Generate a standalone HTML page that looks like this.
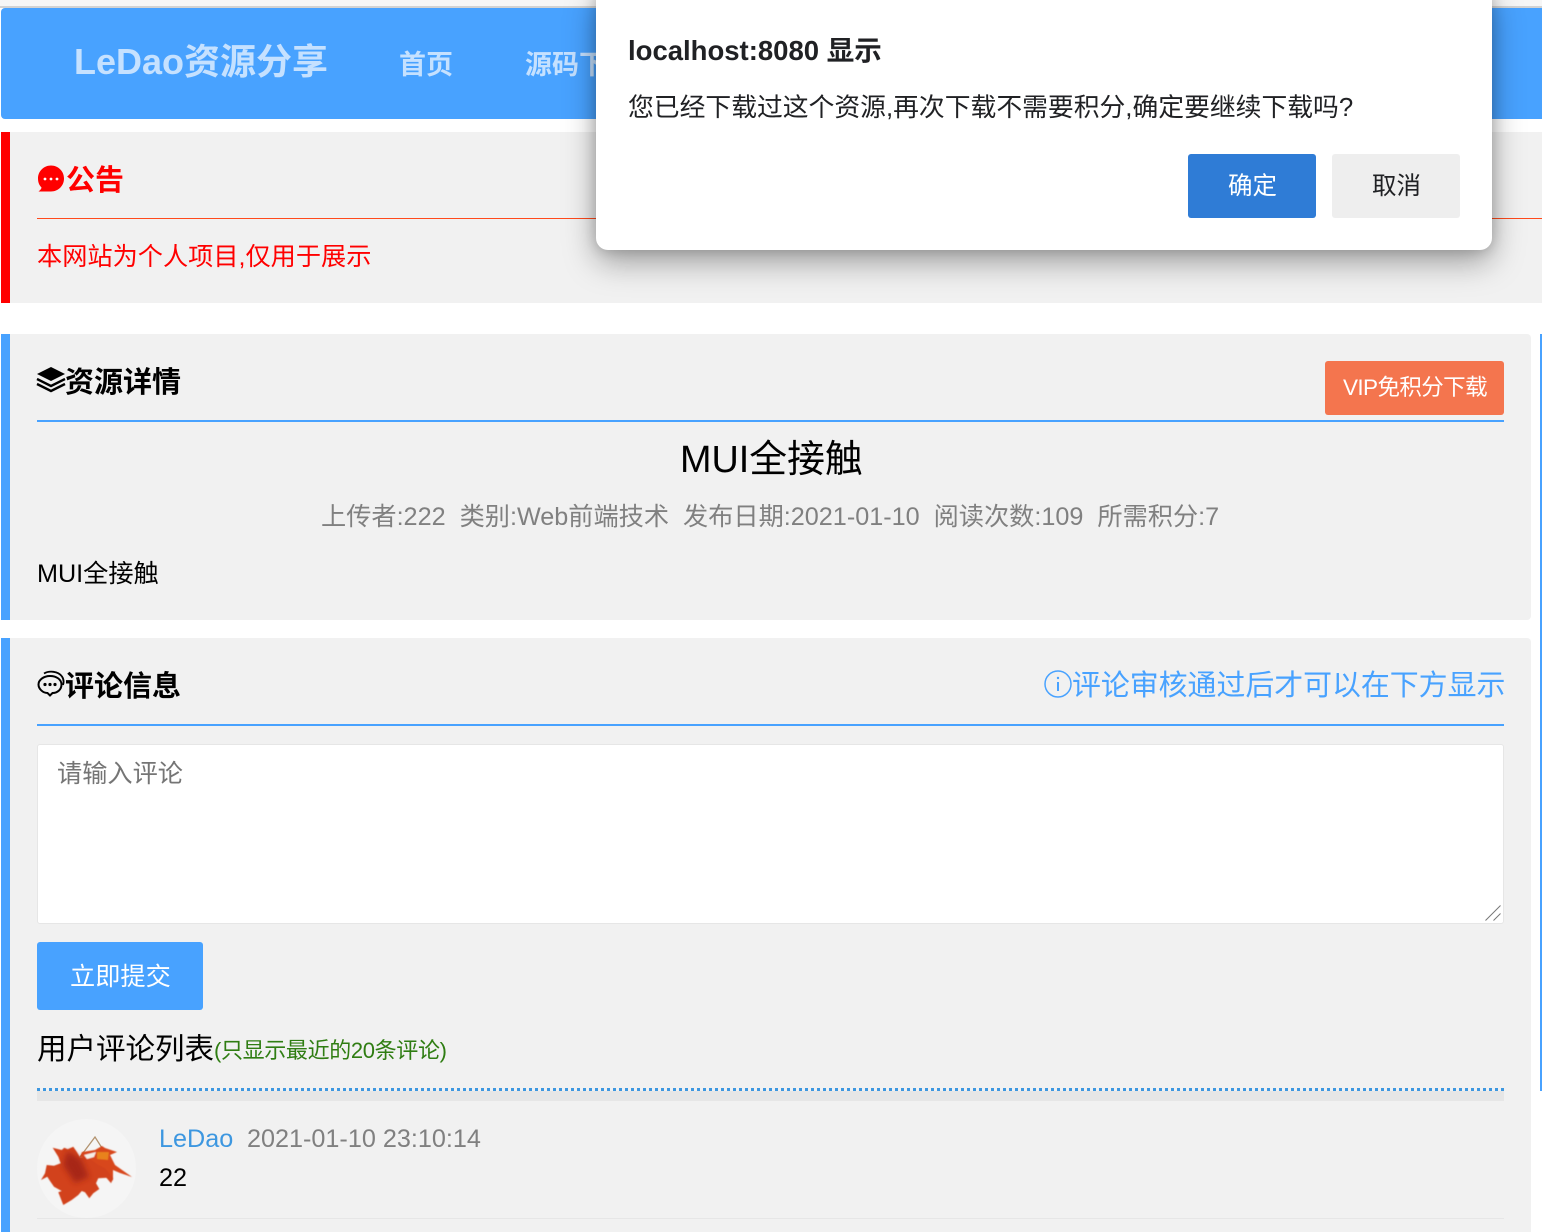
<!DOCTYPE html>
<html lang="zh-CN"><head><meta charset="utf-8"><title>MUI全接触</title>
<style>
html,body{margin:0;padding:0;background:#fff}
#p{position:relative;width:1542px;height:1232px;overflow:hidden;background:#fff;font-family:"Liberation Sans","Noto Sans CJK SC",sans-serif;font-size:25.200px;color:#000}
.a{position:absolute}
.t{position:absolute;white-space:nowrap;line-height:36px}
.b{font-weight:bold}
</style></head><body><div id="p">
<div class="a" style="left:0;top:0;width:1542px;height:6px;background:#f6f6f6"></div>
<div class="a" style="left:0;top:6px;width:1542px;height:2px;background:#d2d2d2"></div>
<div class="a" style="left:1px;top:8px;width:1541px;height:111px;background:#48a2ff;border-radius:4px 0 0 4px"></div>
<div class="t b" style="left:74px;top:44px;font-size:36px;color:#c5e1ff">LeDao资源分享</div>
<div class="t b" style="left:399px;top:47px;font-size:27px;color:#c5e1ff">首页</div>
<div class="t b" style="left:525px;top:47px;font-size:27px;color:#c5e1ff">源码下载</div>

<div class="a" style="left:1px;top:132px;width:1541px;height:171px;background:#f1f1f1"></div>
<div class="a" style="left:1px;top:132px;width:9px;height:171px;background:#f00"></div>
<svg class="a" style="left:37px;top:165px" width="28" height="28" viewBox="0 0 28 28"><path d="M14 0.500C21 .5 27 6 27 13.500S21 26.500 14 26.500H1.500C3.500 25 4.500 23.500 4.500 22.500C2 20 1 17 1 13.500C1 6 7 .5 14 .5Z" fill="#f00"/><circle cx="8" cy="14" r="1.400" fill="#fff"/><circle cx="14" cy="14" r="1.400" fill="#fff"/><circle cx="20" cy="14" r="1.400" fill="#fff"/></svg>
<div class="t b" style="left:66px;top:163px;font-size:29px;color:#f00">公告</div>
<div class="a" style="left:37px;top:218px;width:1505px;height:1px;background:#ff4a1c"></div>
<div class="t" style="left:37px;top:239px;color:#f00">本网站为个人项目,仅用于展示</div>

<div class="a" style="left:1px;top:334px;width:1530px;height:286px;background:#f1f1f1;border-radius:0 4px 4px 0"></div>
<div class="a" style="left:1px;top:334px;width:9px;height:286px;background:#48a2ff"></div>
<div class="a" style="left:1540px;top:334px;width:2px;height:757px;background:#48a2ff"></div>
<svg class="a" style="left:36px;top:366px" width="30" height="28" viewBox="0 0 30 28"><path d="M15 1L29 8L15 15L1 8Z" fill="#000"/><path d="M1 13L15 20L29 13M1 18L15 25L29 18" fill="none" stroke="#000" stroke-width="2.400"/></svg>
<div class="t b" style="left:65px;top:365px;font-size:29px">资源详情</div>
<div class="a" style="left:1325px;top:361px;width:179px;height:54px;background:#f4754e;border-radius:3px"></div>
<div class="t" style="left:1343px;top:370px;font-size:22.500px;color:#fff;letter-spacing:-.6px">VIP免积分下载</div>
<div class="a" style="left:37px;top:420px;width:1467px;height:2px;background:#48a2ff"></div>
<div class="t" style="left:680px;top:442px;font-size:37.800px">MUI全接触</div>
<div class="t" style="left:321px;top:499px;color:#808080;white-space:pre">上传者:222  类别:Web前端技术  发布日期:2021-01-10  阅读次数:109  所需积分:7</div>
<div class="t" style="left:37px;top:556px">MUI全接触</div>

<div class="a" style="left:1px;top:638px;width:1530px;height:594px;background:#f1f1f1;border-radius:0 4px 0 0"></div>
<div class="a" style="left:1px;top:638px;width:9px;height:594px;background:#48a2ff"></div>
<svg class="a" style="left:37px;top:670px" width="28" height="28" viewBox="0 0 28 28" fill="none" stroke="#000" stroke-width="2"><path d="M13 6C6.500 6 1.500 10 1.500 14.500S6 23 10.500 23L13 25.500L15.500 23C20.500 23 24.500 19.500 24.500 14.500S19.500 6 13 6Z"/><path d="M7 3.500C12 .5 21 1 25 6.500C27 9.500 27 12 26 15" stroke-width="1.800"/><g fill="#000" stroke="none"><circle cx="8" cy="14.500" r="1.600"/><circle cx="13" cy="14.500" r="1.600"/><circle cx="18" cy="14.500" r="1.600"/></g></svg>
<div class="t b" style="left:65px;top:669px;font-size:29px">评论信息</div>
<svg class="a" style="left:1044px;top:670px" width="28" height="28" viewBox="0 0 28 28" fill="none" stroke="#48a2ff"><circle cx="14" cy="14" r="13" stroke-width="1.500"/><path d="M14 12V21" stroke-width="2"/><circle cx="14" cy="8" r="1.200" fill="#48a2ff" stroke="none"/></svg>
<div class="t" style="left:1072px;top:668px;font-size:28.900px;color:#48a2ff">评论审核通过后才可以在下方显示</div>
<div class="a" style="left:37px;top:724px;width:1467px;height:2px;background:#48a2ff"></div>
<div class="a" style="left:37px;top:744px;width:1465px;height:178px;background:#fff;border:1px solid #e6e6e6;border-radius:3px"></div>
<div class="t" style="left:57px;top:756px;color:#757575">请输入评论</div>
<svg class="a" style="left:1484px;top:904px" width="18" height="18" viewBox="0 0 18 18" stroke="#777" stroke-width="1" fill="none"><path d="M1.500 16.500L16.500 1.500M9.500 16.500L16.500 9.500"/></svg>
<div class="a" style="left:37px;top:942px;width:166px;height:68px;background:#48a2ff;border-radius:3px"></div>
<div class="t" style="left:70px;top:959px;color:#fff">立即提交</div>
<div class="t" style="left:37px;top:1032px;font-size:29.500px">用户评论列表</div>
<div class="t" style="left:214px;top:1033px;font-size:22px;color:#2f7d12;letter-spacing:-.35px">(只显示最近的20条评论)</div>
<div class="a" style="left:37px;top:1088px;width:1467px;height:3px;background-image:repeating-linear-gradient(90deg,#3d97e0 0 3px,transparent 3px 6px)"></div>
<div class="a" style="left:37px;top:1091px;width:1467px;height:10px;background:#e6e6e6"></div>
<div class="a" style="left:37px;top:1119px;width:99px;height:99px;border-radius:50%;background:#f5f5f5"></div>
<svg class="a" style="left:37px;top:1119px" width="99" height="99" viewBox="0 0 99 99">
<defs><filter id="s" x="-10%" y="-10%" width="120%" height="120%"><feGaussianBlur stdDeviation=".4"/></filter><filter id="m" x="-30%" y="-30%" width="160%" height="160%"><feGaussianBlur stdDeviation="3"/></filter></defs>
<path d="M43 38L58 18L65 29" fill="none" stroke="#b39470" stroke-width="1.300"/>
<g filter="url(#s)">
<path d="M65 27L68 29L80 33L73 36L78 46L95 58L83 54L76 51L76 61L73 63L61 49L50 39L43 38L45 33L58 31Z" fill="#d8461a"/>
<path d="M15.700 28.700L24.700 31L27.300 28.700L30.700 30.300L36.300 27.700L39.700 32.700L43 38.300L51.300 38.700L61.300 46L68 49.300L76.300 59.300L74 64.300L70.300 58.700L61.300 59.300L59 64.300L62.300 70L56.300 74.300L52.300 79.300L48 73.300L44.700 72L41.300 76L34.700 81L26.300 86L21.300 73.300L24.700 72L17 67.700L13 62L10.300 57.700L4 61L8 54.300L9.700 46L17 46.700L23.700 44.300L21.300 37.700Z" fill="#d2421a"/>
<path d="M47 36L59 33L57 38L50 40Z" fill="#f5efe6"/>
</g>
<path d="M30 32L44 40L52 58L38 64L26 46Z" fill="#a02417" opacity=".85" filter="url(#m)"/>
<path d="M60 33L72 33L71 41L60 40Z" fill="#e8821f" filter="url(#s)"/>
</svg>
<div class="t" style="left:159px;top:1121px;color:#3d97e0">LeDao</div>
<div class="t" style="left:247px;top:1121px;color:#808080">2021-01-10 23:10:14</div>
<div class="t" style="left:159px;top:1160px">22</div>
<div class="a" style="left:37px;top:1218px;width:1467px;height:1px;background:#e6e6e6"></div>

<div class="a" style="left:596px;top:-12px;width:896px;height:262px;background:#fff;border-radius:12px;box-shadow:0 12px 32px rgba(0,0,0,.35),0 0 14px rgba(0,0,0,.18)"></div>
<div class="t b" style="left:628px;top:33px;font-size:27.500px;color:#202124">localhost:8080 显示</div>
<div class="t" style="left:628px;top:90px;font-size:25.800px;color:#202124">您已经下载过这个资源,再次下载不需要积分,确定要继续下载吗?</div>
<div class="a" style="left:1188px;top:154px;width:128px;height:64px;background:#2f7cd6;border-radius:3px"></div>
<div class="t" style="left:1228px;top:169px;font-size:24.500px;color:#fff">确定</div>
<div class="a" style="left:1332px;top:154px;width:128px;height:64px;background:#eeeeee;border-radius:3px"></div>
<div class="t" style="left:1372px;top:169px;font-size:24.500px;color:#202124">取消</div>
</div></body></html>
